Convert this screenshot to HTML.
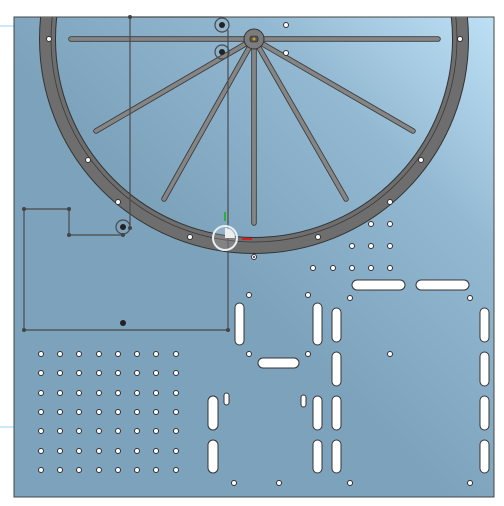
<!DOCTYPE html>
<html><head><meta charset="utf-8"><style>html,body{margin:0;padding:0;background:#fff;}svg{display:block}</style></head>
<body>
<svg width="504" height="506" viewBox="0 0 504 506" xmlns="http://www.w3.org/2000/svg">
<defs>
<linearGradient id="bg" x1="1" y1="0" x2="0.45" y2="0.55">
<stop offset="0" stop-color="#bde0f5"/>
<stop offset="0.45" stop-color="#93b9d2"/>
<stop offset="1" stop-color="#7da2bc"/>
</linearGradient>
<clipPath id="cp"><rect x="14" y="17" width="480" height="480"/></clipPath>
</defs>
<line x1="0" y1="26" x2="14" y2="26" stroke="#bfe0f4" stroke-width="1.5"/>
<line x1="0" y1="427" x2="14" y2="427" stroke="#bfe0f4" stroke-width="1.5"/>
<rect x="14" y="17" width="480" height="480" fill="#7da2bc"/>
<rect x="14" y="17" width="480" height="480" fill="url(#bg)" stroke="#444" stroke-width="1"/>
<g clip-path="url(#cp)">
<circle cx="254" cy="39" r="206.5" fill="none" stroke="#6e6e6e" stroke-width="16"/>
<circle cx="254" cy="39" r="214.5" fill="none" stroke="#333" stroke-width="1"/>
<circle cx="254" cy="39" r="198.5" fill="none" stroke="#333" stroke-width="1"/>
<circle cx="254" cy="39" r="203" fill="none" stroke="#3a3a3a" stroke-width="0.8"/>
<g stroke="#3a3a3a" stroke-width="5.5" stroke-linecap="round">
<line x1="71" y1="39" x2="438" y2="39"/>
<line x1="254" y1="39" x2="96" y2="131"/>
<line x1="254" y1="39" x2="164" y2="199"/>
<line x1="254" y1="39" x2="254" y2="223"/>
<line x1="254" y1="39" x2="346" y2="199"/>
<line x1="254" y1="39" x2="413" y2="131"/>
</g>
<g stroke="#858585" stroke-width="3.8" stroke-linecap="round">
<line x1="71" y1="39" x2="438" y2="39"/>
<line x1="254" y1="39" x2="96" y2="131"/>
<line x1="254" y1="39" x2="164" y2="199"/>
<line x1="254" y1="39" x2="254" y2="223"/>
<line x1="254" y1="39" x2="346" y2="199"/>
<line x1="254" y1="39" x2="413" y2="131"/>
</g>
<circle cx="254" cy="39" r="10" fill="#7c7c7c" stroke="#333" stroke-width="1"/>
<rect x="250" y="36" width="8" height="6" rx="2" fill="#555" stroke="#222" stroke-width="0.6"/>
<circle cx="254" cy="39" r="1.5" fill="#c9a020"/>
</g>
<g stroke="#4a4a4a" stroke-width="1.2" fill="none">
<line x1="130" y1="17" x2="222" y2="17"/>
<line x1="130" y1="17" x2="130" y2="228"/>
<line x1="228" y1="30" x2="228" y2="330"/>
<polyline points="123,235 69,235 69,209 24,209 24,330 228,330"/>
<circle cx="222" cy="25" r="7"/>
<circle cx="222" cy="52" r="7"/>
<circle cx="123" cy="227" r="7"/>
</g>
<g fill="#222">
<circle cx="222" cy="25" r="3"/><circle cx="222" cy="52" r="3"/><circle cx="123" cy="227" r="3"/>
<circle cx="123" cy="323" r="3"/>
</g>
<g fill="#444">
<circle cx="130" cy="17" r="2"/><circle cx="24" cy="209" r="2"/><circle cx="69" cy="209" r="2"/><circle cx="69" cy="235" r="2"/>
<circle cx="123" cy="235" r="2"/><circle cx="130" cy="228" r="2"/><circle cx="24" cy="330" r="2"/><circle cx="228" cy="330" r="2"/>
</g>
<line x1="225" y1="212" x2="225" y2="221" stroke="#2fae3a" stroke-width="2"/>
<line x1="242" y1="239" x2="252" y2="239" stroke="#d02020" stroke-width="2"/>
<circle cx="225" cy="238" r="12" fill="rgba(255,255,255,0.15)" stroke="#e8f0f4" stroke-width="2"/>
<path d="M225 238 V228 A10 10 0 0 1 235 238 Z" fill="#eee"/>
<g fill="#fff" stroke="#333" stroke-width="1">
<circle cx="49" cy="39" r="2.5"/><circle cx="460" cy="39" r="2.5"/>
<circle cx="88" cy="160" r="2.5"/><circle cx="421" cy="160" r="2.5"/>
<circle cx="190" cy="237" r="2.5"/><circle cx="318" cy="237" r="2.5"/>
<circle cx="118" cy="202" r="2.5"/><circle cx="390" cy="202" r="2.5"/>
<circle cx="286" cy="25" r="2.5"/><circle cx="286" cy="53" r="2.5"/>
<circle cx="254" cy="257" r="2.5"/>
<circle cx="371" cy="224" r="2.5"/><circle cx="390" cy="224" r="2.5"/>
<circle cx="352" cy="246" r="2.5"/><circle cx="371" cy="246" r="2.5"/><circle cx="390" cy="246" r="2.5"/>
<circle cx="313" cy="268" r="2.5"/><circle cx="333" cy="268" r="2.5"/><circle cx="352" cy="268" r="2.5"/><circle cx="371" cy="268" r="2.5"/><circle cx="390" cy="268" r="2.5"/>
<circle cx="249" cy="295" r="2.5"/><circle cx="308" cy="295" r="2.5"/><circle cx="350" cy="298" r="2.5"/><circle cx="470" cy="298" r="2.5"/>
<circle cx="249" cy="354" r="2.5"/><circle cx="308" cy="354" r="2.5"/><circle cx="390" cy="354" r="2.5"/>
<circle cx="234" cy="483" r="2.5"/><circle cx="279" cy="483" r="2.5"/><circle cx="350" cy="483" r="2.5"/><circle cx="470" cy="483" r="2.5"/>
</g>
<circle cx="254" cy="257" r="1" fill="#333"/>
<g fill="#fff" stroke="#333" stroke-width="1">
<circle cx="41" cy="354" r="2.5"/><circle cx="60" cy="354" r="2.5"/><circle cx="79" cy="354" r="2.5"/><circle cx="99" cy="354" r="2.5"/><circle cx="118" cy="354" r="2.5"/><circle cx="137" cy="354" r="2.5"/><circle cx="156" cy="354" r="2.5"/><circle cx="176" cy="354" r="2.5"/>
<circle cx="41" cy="373" r="2.5"/><circle cx="60" cy="373" r="2.5"/><circle cx="79" cy="373" r="2.5"/><circle cx="99" cy="373" r="2.5"/><circle cx="118" cy="373" r="2.5"/><circle cx="137" cy="373" r="2.5"/><circle cx="156" cy="373" r="2.5"/><circle cx="176" cy="373" r="2.5"/>
<circle cx="41" cy="393" r="2.5"/><circle cx="60" cy="393" r="2.5"/><circle cx="79" cy="393" r="2.5"/><circle cx="99" cy="393" r="2.5"/><circle cx="118" cy="393" r="2.5"/><circle cx="137" cy="393" r="2.5"/><circle cx="156" cy="393" r="2.5"/><circle cx="176" cy="393" r="2.5"/>
<circle cx="41" cy="412" r="2.5"/><circle cx="60" cy="412" r="2.5"/><circle cx="79" cy="412" r="2.5"/><circle cx="99" cy="412" r="2.5"/><circle cx="118" cy="412" r="2.5"/><circle cx="137" cy="412" r="2.5"/><circle cx="156" cy="412" r="2.5"/><circle cx="176" cy="412" r="2.5"/>
<circle cx="41" cy="431" r="2.5"/><circle cx="60" cy="431" r="2.5"/><circle cx="79" cy="431" r="2.5"/><circle cx="99" cy="431" r="2.5"/><circle cx="118" cy="431" r="2.5"/><circle cx="137" cy="431" r="2.5"/><circle cx="156" cy="431" r="2.5"/><circle cx="176" cy="431" r="2.5"/>
<circle cx="41" cy="451" r="2.5"/><circle cx="60" cy="451" r="2.5"/><circle cx="79" cy="451" r="2.5"/><circle cx="99" cy="451" r="2.5"/><circle cx="118" cy="451" r="2.5"/><circle cx="137" cy="451" r="2.5"/><circle cx="156" cy="451" r="2.5"/><circle cx="176" cy="451" r="2.5"/>
<circle cx="41" cy="470" r="2.5"/><circle cx="60" cy="470" r="2.5"/><circle cx="79" cy="470" r="2.5"/><circle cx="99" cy="470" r="2.5"/><circle cx="118" cy="470" r="2.5"/><circle cx="137" cy="470" r="2.5"/><circle cx="156" cy="470" r="2.5"/><circle cx="176" cy="470" r="2.5"/>
</g>
<g fill="#fff" stroke="#333" stroke-width="1">
<rect x="352" y="280" width="53" height="10" rx="5"/>
<rect x="416" y="280" width="53" height="10" rx="5"/>
<rect x="258" y="358" width="41" height="10" rx="5"/>
<rect x="235" y="303" width="9" height="42" rx="4.5"/>
<rect x="313" y="303" width="9" height="42" rx="4.5"/>
<rect x="332" y="308" width="9" height="34" rx="4.5"/>
<rect x="332" y="352" width="9" height="34" rx="4.5"/>
<rect x="480" y="308" width="9" height="34" rx="4.5"/>
<rect x="480" y="352" width="9" height="34" rx="4.5"/>
<rect x="208" y="396" width="10" height="34" rx="5"/>
<rect x="208" y="440" width="10" height="33" rx="5"/>
<rect x="313" y="396" width="9" height="34" rx="4.5"/>
<rect x="332" y="396" width="9" height="34" rx="4.5"/>
<rect x="313" y="440" width="9" height="33" rx="4.5"/>
<rect x="332" y="440" width="9" height="33" rx="4.5"/>
<rect x="480" y="396" width="9" height="34" rx="4.5"/>
<rect x="480" y="440" width="9" height="33" rx="4.5"/>
<rect x="224" y="393" width="5" height="12" rx="2.5"/>
<rect x="301" y="395" width="5" height="12" rx="2.5"/>
</g>
</svg>
</body></html>
